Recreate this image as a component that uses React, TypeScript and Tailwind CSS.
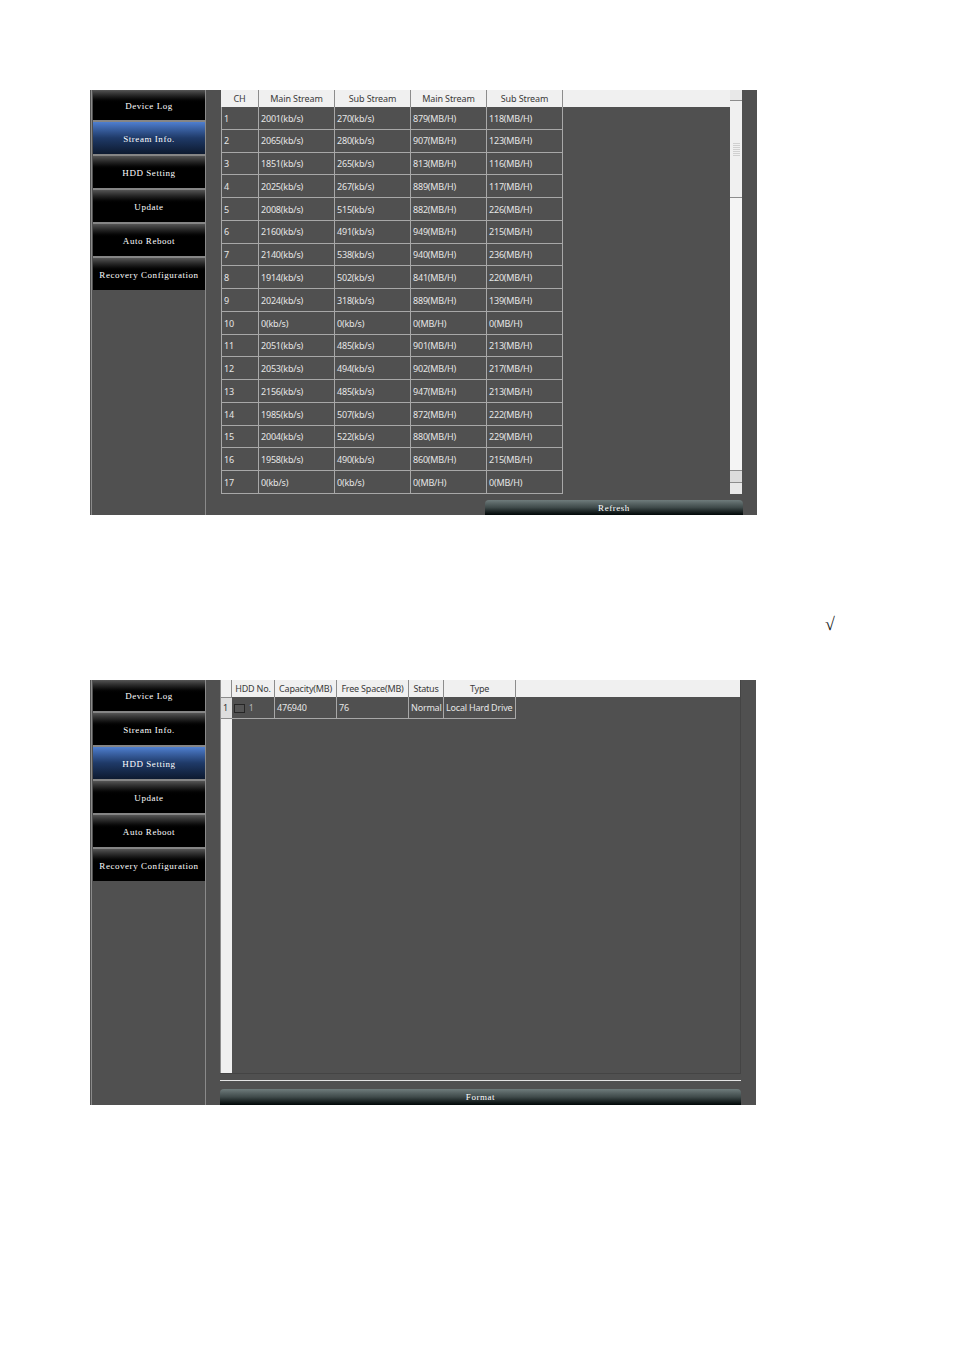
import React from 'react';

const menu = ['Device Log', 'Stream Info.', 'HDD Setting', 'Update', 'Auto Reboot', 'Recovery Configuration'];

const streamRows = [
  ['1', '2001(kb/s)', '270(kb/s)', '879(MB/H)', '118(MB/H)'],
  ['2', '2065(kb/s)', '280(kb/s)', '907(MB/H)', '123(MB/H)'],
  ['3', '1851(kb/s)', '265(kb/s)', '813(MB/H)', '116(MB/H)'],
  ['4', '2025(kb/s)', '267(kb/s)', '889(MB/H)', '117(MB/H)'],
  ['5', '2008(kb/s)', '515(kb/s)', '882(MB/H)', '226(MB/H)'],
  ['6', '2160(kb/s)', '491(kb/s)', '949(MB/H)', '215(MB/H)'],
  ['7', '2140(kb/s)', '538(kb/s)', '940(MB/H)', '236(MB/H)'],
  ['8', '1914(kb/s)', '502(kb/s)', '841(MB/H)', '220(MB/H)'],
  ['9', '2024(kb/s)', '318(kb/s)', '889(MB/H)', '139(MB/H)'],
  ['10', '0(kb/s)', '0(kb/s)', '0(MB/H)', '0(MB/H)'],
  ['11', '2051(kb/s)', '485(kb/s)', '901(MB/H)', '213(MB/H)'],
  ['12', '2053(kb/s)', '494(kb/s)', '902(MB/H)', '217(MB/H)'],
  ['13', '2156(kb/s)', '485(kb/s)', '947(MB/H)', '213(MB/H)'],
  ['14', '1985(kb/s)', '507(kb/s)', '872(MB/H)', '222(MB/H)'],
  ['15', '2004(kb/s)', '522(kb/s)', '880(MB/H)', '229(MB/H)'],
  ['16', '1958(kb/s)', '490(kb/s)', '860(MB/H)', '215(MB/H)'],
  ['17', '0(kb/s)', '0(kb/s)', '0(MB/H)', '0(MB/H)'],
];

const streamHead = ['CH', 'Main Stream', 'Sub Stream', 'Main Stream', 'Sub Stream'];

const Sidebar = ({ active, firstHeight }: { active: number; firstHeight: string }) => (
  <div className="w-[115px] h-full shrink-0 ml-[1px] pl-[1px] border-l border-[#8a8a8a]">
    <div className="w-[113px] h-full flex flex-col border-r border-[#8a8a8a]">
      {menu.map((label, i) => (
        <React.Fragment key={label}>
          {i > 0 && <div className="h-[2px] shrink-0 bg-[#858585]" />}
          <div
            className={
              (i === 0 ? firstHeight : 'h-[32px]') +
              ' shrink-0 flex items-center justify-center pt-[3px] font-["Liberation_Serif",serif] text-[9px] tracking-[0.55px] whitespace-nowrap text-white ' +
              (i === active
                ? 'bg-gradient-to-b from-[#4f7fd0] via-[#1f3a68] to-[#0d1a30]'
                : 'bg-gradient-to-b from-[#555555] via-[#000000] via-45% to-[#000000]')
            }
          >
            {label}
          </div>
        </React.Fragment>
      ))}
    </div>
  </div>
);

const ActionButton = ({ label, className }: { label: string; className: string }) => (
  <div
    className={
      className +
      ' flex items-center justify-center pt-[2px] rounded-t-[4px] bg-gradient-to-b from-[#6f7c7c] via-[#3f4a4a] via-50% to-[#030808] font-["Liberation_Serif",serif] text-[9px] tracking-[0.55px] text-white'
    }
  >
    {label}
  </div>
);

const Scrollbar = () => (
  <div className="w-[12px] h-full shrink-0 flex flex-col bg-[#f4f4f4]">
    <div className="h-[11px] shrink-0 bg-[#e8e8e8] border-b border-[#8c8c8c]" />
    <div className="h-[97px] shrink-0 flex items-center justify-center bg-[#f0f0f0] border-b border-[#8c8c8c]">
      <div className="w-[7px] h-[14px] bg-[repeating-linear-gradient(0deg,#d0d0d0_0px,#d0d0d0_1px,#f0f0f0_1px,#f0f0f0_2px)]" />
    </div>
    <div className="flex-1" />
    <div className="h-[12px] shrink-0 bg-[#dcdcdc] border-t border-[#8c8c8c]" />
    <div className="h-[12px] shrink-0 bg-[#e8e8e8] border-t border-[#8c8c8c]" />
  </div>
);

const StreamPanel = () => (
  <div className="ml-[90px] w-[667px] h-[425px] flex bg-[#505050]">
    <Sidebar active={1} firstHeight="h-[30px]" />
    <div className="ml-[15px] w-[521px] flex flex-col font-['Noto_Sans',sans-serif]">
      <div className="h-[404px] flex">
        <div className="w-[509px] flex flex-col">
          <div className="h-[17px] shrink-0 flex bg-[#f0f0f0]">
            {streamHead.map((h, i) => (
              <div
                key={i}
                className={
                  (i === 0 ? 'w-[38px]' : 'w-[76px]') +
                  ' flex items-center justify-center border-r border-[#8c8c8c] text-[9px] tracking-[-0.1px] text-[#3a3a3a]'
                }
              >
                {h}
              </div>
            ))}
          </div>
          <div className="flex-1 flex flex-col">
            {streamRows.map((row) => (
              <div key={row[0]} className="flex-1 flex w-[342px] border-b border-[#a8a8a8]">
                {row.map((cell, i) => (
                  <div
                    key={i}
                    className={
                      (i === 0 ? 'w-[38px] border-l' : 'w-[76px]') +
                      ' flex items-center pl-[2px] pt-[1px] border-r border-[#a8a8a8] text-[9px] tracking-[-0.2px] text-[#e6e6e6]'
                    }
                  >
                    {cell}
                  </div>
                ))}
              </div>
            ))}
          </div>
        </div>
        <Scrollbar />
      </div>
      <div className="mt-[6px] flex justify-end -mr-[1px]">
        <ActionButton label="Refresh" className="w-[258px] h-[15px]" />
      </div>
    </div>
  </div>
);

const hddCols = [
  { head: 'HDD No.', w: 'w-[43px]' },
  { head: 'Capacity(MB)', w: 'w-[62px]', cell: '476940' },
  { head: 'Free Space(MB)', w: 'w-[72px]', cell: '76' },
  { head: 'Status', w: 'w-[35px]', cell: 'Normal' },
  { head: 'Type', w: 'w-[72px]', cell: 'Local Hard Drive' },
];

const HddPanel = () => (
  <div className="ml-[90px] w-[666px] h-[425px] flex bg-[#505050]">
    <Sidebar active={2} firstHeight="h-[31px]" />
    <div className="ml-[14px] w-[521px] flex flex-col font-['Noto_Sans',sans-serif]">
      <div className="h-[394px] flex border-b border-[#444444] border-r">
        <div className="w-[12px] shrink-0 flex flex-col bg-[#f0f0f0] border-l border-[#8c8c8c]">
          <div className="h-[17px] shrink-0 border-r border-[#8c8c8c]" />
          <div className="h-[22px] shrink-0 flex items-center pl-[2px] bg-[#dedede] border-y border-[#8c8c8c] text-[9px] text-[#333333]">
            1
          </div>
        </div>
        <div className="flex-1 flex flex-col">
          <div className="h-[17px] shrink-0 flex bg-[#f0f0f0]">
            {hddCols.map((c) => (
              <div
                key={c.head}
                className={c.w + ' flex items-center justify-center border-r border-[#8c8c8c] text-[9px] tracking-[-0.2px] text-[#3a3a3a] whitespace-nowrap'}
              >
                {c.head}
              </div>
            ))}
          </div>
          <div className="h-[22px] shrink-0 flex">
            {hddCols.map((c) => (
              <div
                key={c.head}
                className={c.w + ' flex items-center pl-[2px] pt-[1px] border-r border-b border-[#a8a8a8] text-[9px] tracking-[-0.2px] text-[#e6e6e6] whitespace-nowrap'}
              >
                {c.cell ?? (
                  <span className="flex items-center gap-[4px] text-[8px] text-[#bbbbbb]">
                    <span className="w-[11px] h-[9px] bg-[#555555] border border-[#262626]" />
                    1
                  </span>
                )}
              </div>
            ))}
          </div>
        </div>
      </div>
      <div className="mt-[6px] h-[1px] bg-[#e4e4e4]" />
      <ActionButton label="Format" className="mt-[8px] h-[16px]" />
    </div>
  </div>
);

export default function App() {
  return (
    <div className="w-[954px] h-[1351px] pt-[90px] bg-white overflow-hidden">
      <StreamPanel />
      <div className="h-[165px] pt-[52px] flex items-center justify-end pr-[119px]">
        <span className="font-['Liberation_Serif',serif] text-[18px] leading-none text-[#222222]">√</span>
      </div>
      <HddPanel />
    </div>
  );
}
